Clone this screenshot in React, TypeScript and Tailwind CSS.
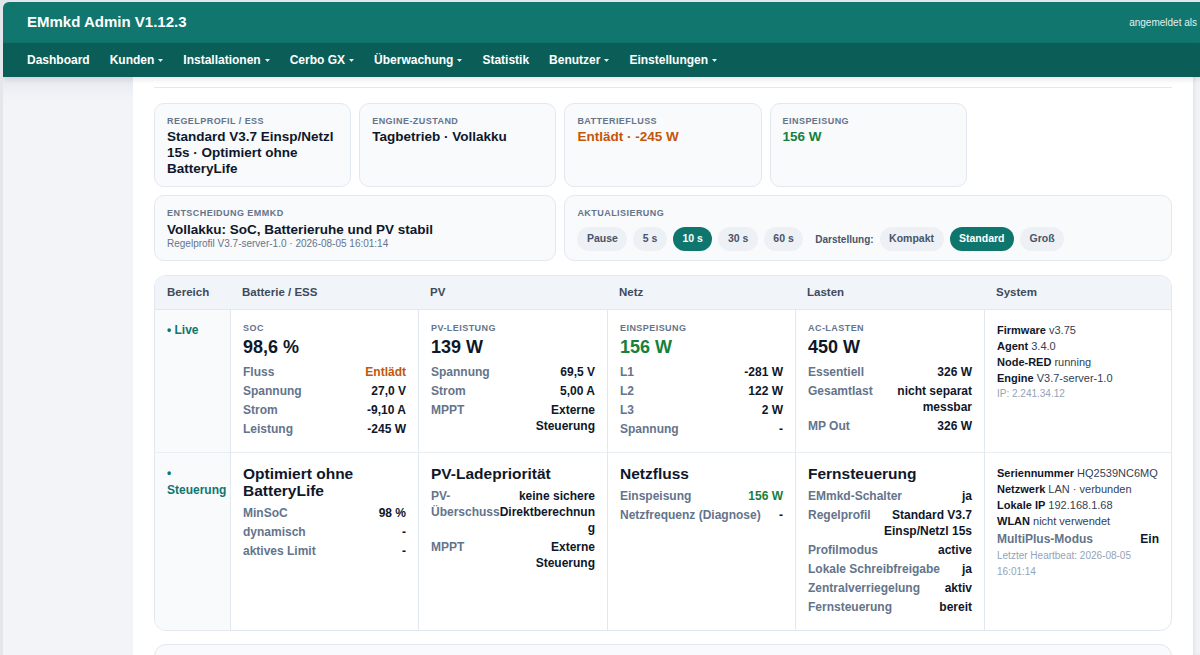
import React from "react"

const navItems: [string, boolean][] = [
  ["Dashboard", false],
  ["Kunden", true],
  ["Installationen", true],
  ["Cerbo GX", true],
  ["Überwachung", true],
  ["Statistik", false],
  ["Benutzer", true],
  ["Einstellungen", true],
]

function Caret() {
  return (
    <svg width="5" height="3" viewBox="0 0 5 3" className="ml-[4px] mt-[1px] opacity-90">
      <path d="M0 0h5L2.5 3z" fill="currentColor" />
    </svg>
  )
}

function Card({ label, children, className = "" }: { label: string; children: React.ReactNode; className?: string }) {
  return (
    <div className={`rounded-[10px] border border-[#e2e8f0] bg-[#f8fafc] px-3 pt-[11px] pb-[9px] ${className}`}>
      <div className="text-[9px] leading-[12px] font-bold uppercase tracking-wider text-[#64748b]">{label}</div>
      {children}
    </div>
  )
}

function KV({ k, v, vc = "text-[#0f172a]" }: { k: string; v: string; vc?: string }) {
  return (
    <div className="flex justify-between gap-2 text-[12px] leading-[16px] font-bold">
      <span className="min-w-0 text-[#64748b]">{k}</span>
      <span className={`max-w-[60%] shrink-0 text-right [overflow-wrap:anywhere] ${vc}`}>{v}</span>
    </div>
  )
}

function Metric({ label, value, vc = "text-[#0f172a]", rows }: { label: string; value: string; vc?: string; rows: React.ReactNode }) {
  return (
    <>
      <div className="text-[9px] leading-[12px] font-bold uppercase tracking-wider text-[#64748b]">{label}</div>
      <div className={`mt-[2px] text-[18px] leading-[22px] font-semibold ${vc}`}>{value}</div>
      <div className="mt-[6px] flex flex-col gap-[3px]">{rows}</div>
    </>
  )
}

function Section({ title, rows }: { title: string; rows: React.ReactNode }) {
  return (
    <>
      <div className="text-[15.5px] leading-[17px] font-bold text-[#0f172a]">{title}</div>
      <div className="mt-[6px] flex flex-col gap-[3px]">{rows}</div>
    </>
  )
}

function Info({ k, v }: { k: string; v: string }) {
  return (
    <div className="text-[11px] leading-[16px] text-[#334155]">
      <span className="font-bold text-[#0f172a]">{k}</span> {v}
    </div>
  )
}

const pill = "h-[24px] px-[9.5px] rounded-full text-[10.5px] font-bold flex items-center"

export default function App() {
  const cell = "border-l border-[#e2e8f0] px-3 pt-3 pb-[15px]"
  return (
    <div className="w-[1200px] h-[655px] overflow-hidden bg-[#e3e6eb] pt-[2px] pl-[3px] font-['Liberation_Sans',Arial,Helvetica,sans-serif]">
      <div className="h-full flex flex-col rounded-tl-[6px] overflow-hidden">
        {/* Header */}
        <header className="h-[41px] shrink-0 bg-[#10766e] flex items-center justify-between pl-[24px] pr-[3px]">
          <span className="text-white font-bold text-[15px]">EMmkd Admin V1.12.3</span>
          <span className="text-[#e4f1ef] text-[10px]">angemeldet als</span>
        </header>
        <nav className="h-[34px] shrink-0 bg-[#0b5e58] flex items-center pl-[14px] relative z-10 shadow-[0_2px_6px_rgba(15,23,42,0.12)]">
          {navItems.map(([name, dd]) => (
            <div key={name} className="px-[10px] flex items-center text-white text-[12px] font-bold">
              {name}
              {dd && <Caret />}
            </div>
          ))}
        </nav>

        <div className="flex flex-1 min-h-0">
          <aside className="w-[130px] shrink-0 bg-[linear-gradient(to_bottom,#e7e9ef,#f3f4f8_22px)]" />

          <main className="flex-1 bg-white px-[21px]">
            <div className="h-[11px] border-b border-[#e5e7eb]" />

            {/* Status cards */}
            <div className="mt-[15px] grid grid-cols-5 gap-2">
              <Card label="Regelprofil / ESS">
                <div className="mt-[2px] text-[13.5px] leading-[16px] font-bold text-[#0f172a]">
                  Standard V3.7 Einsp/Netzl 15s · Optimiert ohne BatteryLife
                </div>
              </Card>
              <Card label="Engine-Zustand">
                <div className="mt-[2px] text-[13.5px] leading-[16px] font-bold text-[#0f172a]">Tagbetrieb · Vollakku</div>
              </Card>
              <Card label="Batteriefluss">
                <div className="mt-[2px] text-[13.5px] leading-[16px] font-bold text-[#c2570c]">Entlädt · -245 W</div>
              </Card>
              <Card label="Einspeisung">
                <div className="mt-[2px] text-[13.5px] leading-[16px] font-bold text-[#16803c]">156 W</div>
              </Card>
              <div />

              <Card label="Entscheidung EMmkd" className="col-span-2">
                <div className="mt-[3px] text-[13.5px] leading-[16px] font-bold text-[#0f172a]">
                  Vollakku: SoC, Batterieruhe und PV stabil
                </div>
                <div className="text-[10px] leading-[12px] text-[#64748b]">Regelprofil V3.7-server-1.0 · 2026-08-05 16:01:14</div>
              </Card>
              <Card label="Aktualisierung" className="col-span-3">
                <div className="mt-[8px] flex items-center gap-[6px]">
                  <span className={`${pill} bg-[#edf1f5] text-[#475569]`}>Pause</span>
                  <span className={`${pill} bg-[#edf1f5] text-[#475569]`}>5 s</span>
                  <span className={`${pill} bg-[#0f766e] text-white`}>10 s</span>
                  <span className={`${pill} bg-[#edf1f5] text-[#475569]`}>30 s</span>
                  <span className={`${pill} bg-[#edf1f5] text-[#475569]`}>60 s</span>
                  <span className="ml-[6px] text-[10px] font-bold text-[#475569]">Darstellung:</span>
                  <span className={`${pill} bg-[#edf1f5] text-[#475569]`}>Kompakt</span>
                  <span className={`${pill} bg-[#0f766e] text-white`}>Standard</span>
                  <span className={`${pill} bg-[#edf1f5] text-[#475569]`}>Groß</span>
                </div>
              </Card>
            </div>

            {/* Table */}
            <div className="mt-[14px] rounded-xl border border-[#e2e8f0] overflow-hidden grid grid-cols-[75px_188px_189px_188px_189px_1fr]">
              {["Bereich", "Batterie / ESS", "PV", "Netz", "Lasten", "System"].map((h) => (
                <div key={h} className="h-[34px] flex items-center px-3 bg-[#f1f5f9] border-b border-[#e2e8f0] text-[11.5px] font-bold text-[#3f4a5a]">
                  {h}
                </div>
              ))}

              {/* Live row */}
              <div className="bg-[#f8fafc] px-3 pt-3 pb-[15px] border-b border-[#e9eef5] text-[12px] leading-[16px] font-bold text-[#0f766e]">
                • Live
              </div>
              <div className={`${cell} border-b border-b-[#e9eef5]`}>
                <Metric
                  label="SoC"
                  value="98,6 %"
                  rows={<>
                    <KV k="Fluss" v="Entlädt" vc="text-[#c2570c]" />
                    <KV k="Spannung" v="27,0 V" />
                    <KV k="Strom" v="-9,10 A" />
                    <KV k="Leistung" v="-245 W" />
                  </>}
                />
              </div>
              <div className={`${cell} border-b border-b-[#e9eef5]`}>
                <Metric
                  label="PV-Leistung"
                  value="139 W"
                  rows={<>
                    <KV k="Spannung" v="69,5 V" />
                    <KV k="Strom" v="5,00 A" />
                    <KV k="MPPT" v="Externe Steuerung" />
                  </>}
                />
              </div>
              <div className={`${cell} border-b border-b-[#e9eef5]`}>
                <Metric
                  label="Einspeisung"
                  value="156 W"
                  vc="text-[#16803c]"
                  rows={<>
                    <KV k="L1" v="-281 W" />
                    <KV k="L2" v="122 W" />
                    <KV k="L3" v="2 W" />
                    <KV k="Spannung" v="-" />
                  </>}
                />
              </div>
              <div className={`${cell} border-b border-b-[#e9eef5]`}>
                <Metric
                  label="AC-Lasten"
                  value="450 W"
                  rows={<>
                    <KV k="Essentiell" v="326 W" />
                    <KV k="Gesamtlast" v="nicht separat messbar" />
                    <KV k="MP Out" v="326 W" />
                  </>}
                />
              </div>
              <div className={`${cell} border-b border-b-[#e9eef5]`}>
                <Info k="Firmware" v="v3.75" />
                <Info k="Agent" v="3.4.0" />
                <Info k="Node-RED" v="running" />
                <Info k="Engine" v="V3.7-server-1.0" />
                <div className="text-[10px] leading-[16px] text-[#94a3b8]">IP: 2.241.34.12</div>
              </div>

              {/* Steuerung row */}
              <div className="bg-[#f8fafc] px-3 pt-3 pb-[15px] text-[12px] leading-[17px] font-bold text-[#0f766e]">
                • Steuerung
              </div>
              <div className={cell}>
                <Section
                  title="Optimiert ohne BatteryLife"
                  rows={<>
                    <KV k="MinSoC" v="98 %" />
                    <KV k="dynamisch" v="-" />
                    <KV k="aktives Limit" v="-" />
                  </>}
                />
              </div>
              <div className={cell}>
                <Section
                  title="PV-Ladepriorität"
                  rows={<>
                    <KV k="PV-Überschuss" v="keine sichere Direktberechnung" />
                    <KV k="MPPT" v="Externe Steuerung" />
                  </>}
                />
              </div>
              <div className={cell}>
                <Section
                  title="Netzfluss"
                  rows={<>
                    <KV k="Einspeisung" v="156 W" vc="text-[#16803c]" />
                    <KV k="Netzfrequenz (Diagnose)" v="-" />
                  </>}
                />
              </div>
              <div className={cell}>
                <Section
                  title="Fernsteuerung"
                  rows={<>
                    <KV k="EMmkd-Schalter" v="ja" />
                    <KV k="Regelprofil" v="Standard V3.7 Einsp/Netzl 15s" />
                    <KV k="Profilmodus" v="active" />
                    <KV k="Lokale Schreibfreigabe" v="ja" />
                    <KV k="Zentralverriegelung" v="aktiv" />
                    <KV k="Fernsteuerung" v="bereit" />
                  </>}
                />
              </div>
              <div className={cell}>
                <Info k="Seriennummer" v="HQ2539NC6MQ" />
                <Info k="Netzwerk" v="LAN · verbunden" />
                <Info k="Lokale IP" v="192.168.1.68" />
                <Info k="WLAN" v="nicht verwendet" />
                <div className="mt-[2px]">
                  <KV k="MultiPlus-Modus" v="Ein" />
                </div>
                <div className="mt-[1px] text-[10px] leading-[16px] text-[#94a3b8]">Letzter Heartbeat: 2026-08-05 16:01:14</div>
              </div>
            </div>

            <div className="mt-[13px] h-[40px] rounded-t-xl border border-[#e2e8f0] bg-[#f8fafc]" />
          </main>

          <div className="w-[7px] shrink-0 bg-[#f1f2f5] shadow-[inset_2px_0_3px_rgba(15,23,42,0.05)]" />
        </div>
      </div>
    </div>
  )
}
